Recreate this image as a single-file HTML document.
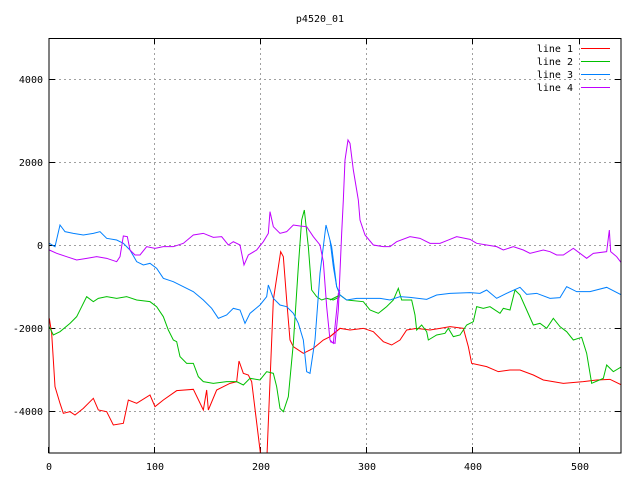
<!DOCTYPE html>
<html><head><meta charset="utf-8"><style>
html,body{margin:0;padding:0;background:#fff;}
svg{display:block;}
text{font-family:"DejaVu Sans Mono","Liberation Mono",monospace;font-size:10px;fill:#000;}
.l{fill:none;stroke-width:1;vector-effect:non-scaling-stroke;}
</style></head><body>
<svg width="640" height="480" viewBox="0 0 640 480" xmlns="http://www.w3.org/2000/svg">
<rect width="640" height="480" fill="#fff"/>
<text x="320" y="22" text-anchor="middle">p4520_01</text>
<g stroke="#a0a0a0" stroke-dasharray="2,3" stroke-width="1">
<line x1="49" y1="79.5" x2="621" y2="79.5"/>
<line x1="49" y1="162.5" x2="621" y2="162.5"/>
<line x1="49" y1="245.5" x2="621" y2="245.5"/>
<line x1="49" y1="328.5" x2="621" y2="328.5"/>
<line x1="49" y1="411.5" x2="621" y2="411.5"/>
<line x1="154.5" y1="38" x2="154.5" y2="453"/>
<line x1="260.5" y1="38" x2="260.5" y2="453"/>
<line x1="366.5" y1="38" x2="366.5" y2="453"/>
<line x1="472.5" y1="38" x2="472.5" y2="453"/>
<line x1="579.5" y1="38" x2="579.5" y2="453"/>
</g>
<g stroke="#000" stroke-width="1">
<path d="M49 79.5h6M49 162.5h6M49 245.5h6M49 328.5h6M49 411.5h6M621 79.5h-6M621 162.5h-6M621 245.5h-6M621 328.5h-6M621 411.5h-6"/>
<path d="M48.5 453v-6M154.5 453v-6M260.5 453v-6M366.5 453v-6M472.5 453v-6M579.5 453v-6M154.5 38v6M260.5 38v6M366.5 38v6M472.5 38v6M579.5 38v6"/>
</g>
<g text-anchor="end">
<text x="43" y="83">4000</text>
<text x="43" y="166">2000</text>
<text x="43" y="249">0</text>
<text x="43" y="332">-2000</text>
<text x="43" y="415">-4000</text>
</g>
<g text-anchor="middle">
<text x="49" y="470">0</text>
<text x="155" y="470">100</text>
<text x="261" y="470">200</text>
<text x="367" y="470">300</text>
<text x="473" y="470">400</text>
<text x="580" y="470">500</text>
</g>
<g text-anchor="end">
<text x="573" y="52">line 1</text>
<text x="573" y="65">line 2</text>
<text x="573" y="78">line 3</text>
<text x="573" y="91">line 4</text>
</g>
<line x1="581" y1="48.5" x2="610" y2="48.5" stroke="#ff0000"/>
<line x1="581" y1="61.5" x2="610" y2="61.5" stroke="#00c000"/>
<line x1="581" y1="74.5" x2="610" y2="74.5" stroke="#0080ff"/>
<line x1="581" y1="87.5" x2="610" y2="87.5" stroke="#c000ff"/>
<defs><clipPath id="c"><rect x="49" y="38" width="572" height="415"/></clipPath></defs>
<g clip-path="url(#c)">
<g transform="translate(40,200) scale(0.33333)">
<polyline class="l" stroke="#ff0000" points="28,355 35,400 45,560 60,610 70,640 90,635 105,645 130,625 160,595 175,630 200,635 220,675 250,670 265,600 290,610 330,585 345,620 370,600 410,572 460,568 490,630 500,570 505,630 530,570 570,550 590,545 597,483 610,520 625,525 635,545 660,750 665,790 680,790 700,300 722,155 730,170 740,300 750,420 760,440 790,460 820,445 850,420 870,410 900,385"/>
<polyline class="l" stroke="#00c000" points="28,380 40,405 60,395 90,370 110,350 125,320 140,290 160,305 175,295 200,290 230,295 260,290 290,300 330,305 350,320 370,350 385,390 400,420 410,425 420,470 440,490 460,490 475,530 490,545 520,550 560,545 590,545 610,555 630,535 660,540 680,515 700,520 710,560 720,625 730,635 745,590 760,430 775,200 785,60 793,30 805,140 815,270 830,290 845,300 860,295 880,300 900,290"/>
<polyline class="l" stroke="#0080ff" points="28,130 45,140 60,75 75,95 100,100 130,105 160,100 180,95 200,115 230,120 250,130 270,150 290,185 310,195 330,190 350,205 370,235 400,245 430,260 460,275 490,300 515,325 535,355 560,345 580,325 600,330 615,370 630,340 660,315 680,290 685,255 700,295 720,315 740,320 760,340 775,370 790,420 800,515 810,520 825,420 840,220 858,75 875,140 890,260 900,280"/>
<polyline class="l" stroke="#c000ff" points="28,150 50,160 80,170 110,180 140,175 170,170 200,175 230,185 240,170 250,108 262,110 270,150 285,165 300,165 320,140 345,145 370,140 400,140 430,130 460,105 490,100 520,112 545,110 565,135 580,125 600,135 612,195 625,165 650,150 670,125 685,100 690,35 700,80 720,100 740,95 760,75 780,78 800,80 820,110 840,135 850,185 860,320 870,420 880,430 895,280 900,270"/>
</g>
<g transform="translate(330,200) scale(0.33333)">
<polyline class="l" stroke="#ff0000" points="0,410 30,385 60,390 100,385 130,395 160,425 185,435 210,420 230,390 260,385 300,390 330,385 360,380 400,385 415,440 425,490 470,500 505,515 540,510 570,510 610,525 640,540 700,550 760,545 800,540 840,538 875,555"/>
<polyline class="l" stroke="#00c000" points="0,300 30,285 50,300 100,305 120,330 145,340 170,320 190,300 205,265 215,300 245,300 255,345 260,390 275,375 290,395 295,420 320,405 345,400 355,385 370,410 390,405 410,375 430,365 440,320 460,325 480,320 510,340 520,325 540,330 555,270 570,285 590,330 610,375 630,370 650,385 670,355 690,380 710,395 730,420 755,412 770,460 785,550 820,535 830,495 850,515 875,500"/>
<polyline class="l" stroke="#0080ff" points="0,120 10,200 20,260 30,285 50,300 80,295 110,295 150,295 180,300 210,290 240,292 290,298 320,285 360,280 420,278 450,280 470,270 500,295 530,280 570,262 590,283 620,280 660,295 690,293 710,260 740,275 780,275 830,262 875,285"/>
<polyline class="l" stroke="#c000ff" points="0,425 15,430 25,330 35,100 40,0 45,-120 54,-180 60,-170 70,-90 80,-30 85,0 90,60 105,105 130,135 160,140 180,140 200,125 240,110 270,115 300,130 330,130 350,122 380,110 420,118 440,130 470,135 500,140 520,150 550,140 580,150 600,160 640,150 660,155 680,165 700,165 730,145 770,175 790,160 830,155 838,90 842,155 860,170 875,190"/>
</g>
</g>
<rect x="49" y="38.5" width="572" height="414.5" fill="none" stroke="#000" stroke-width="1"/>
</svg>
</body></html>
